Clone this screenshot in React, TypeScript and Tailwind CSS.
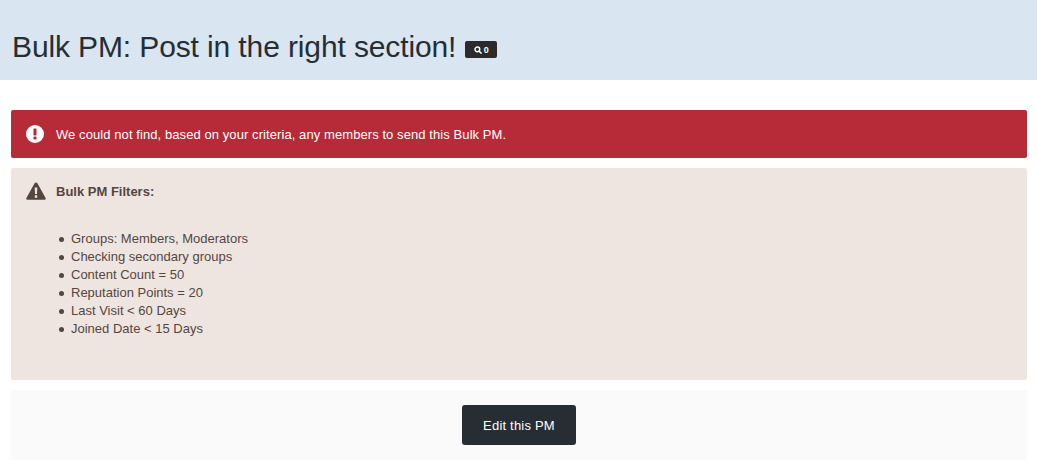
const filters = [
  'Groups: Members, Moderators',
  'Checking secondary groups',
  'Content Count = 50',
  'Reputation Points = 20',
  'Last Visit < 60 Days',
  'Joined Date < 15 Days',
];

export default function App() {
  return (
    <div className="h-[468px] overflow-hidden bg-white font-['Liberation_Sans',Arial,sans-serif] text-[13px] leading-[18px] text-[#262d33]">
      {/* Header */}
      <div className="flex h-[80px] items-end bg-[#d9e6f2] pr-[10px] pl-[12px] pb-[15px]">
        <h1 className="text-[30px] leading-[36px] font-normal tracking-[-0.12px] text-[#262d33]">Bulk PM: Post in the right section!</h1>
        <span className="mb-[7px] ml-[9px] flex h-[17px] w-[32px] items-center justify-center gap-[2px] rounded-[2px] bg-[#2b2b2b] text-[9px] font-bold text-white">
          <svg width="8" height="8" viewBox="0 0 10 10" fill="none" stroke="white" strokeWidth="1.8">
            <circle cx="4.2" cy="4.2" r="3" />
            <path d="M6.5 6.5 9.5 9.5" />
          </svg>
          0
        </span>
      </div>

      <div className="flex flex-col gap-[10px] pt-[30px] pr-[10px] pl-[11px]">
        {/* Error message */}
        <div className="flex h-[48px] items-center rounded-[2px] bg-[#b72a38] px-[15px] tracking-[0.08px] text-white">
          <svg width="18" height="18" viewBox="0 0 18 18" className="mr-[12px]">
            <circle cx="9" cy="9" r="9" fill="white" />
            <rect x="7.5" y="3.4" width="3" height="7.2" rx="0.6" fill="#b72a38" />
            <rect x="7.5" y="11.6" width="3" height="3" rx="0.6" fill="#b72a38" />
          </svg>
          <span className="pt-[2px]">We could not find, based on your criteria, any members to send this Bulk PM.</span>
        </div>

        {/* Filters */}
        <div className="h-[212px] rounded-[2px] bg-[#eee5e0] px-[15px] pt-[14px] text-[#54453f]">
          <div className="flex items-start">
            <svg width="20" height="18" viewBox="0 0 20 18" className="mr-[10px]">
              <path
                fillRule="evenodd"
                fill="#54453f"
                d="M10 0.5c.6 0 1.1.3 1.4.8l8.2 14.6c.5.9-.1 1.9-1.1 1.9H1.5c-1 0-1.6-1-1.1-1.9L8.6 1.3c.3-.5.8-.8 1.4-.8zM8.7 5.5l.3 6.5h2l.3-6.5zM8.8 13.2v2.6h2.4v-2.6z"
              />
            </svg>
            <strong className="mt-[1px]">Bulk PM Filters:</strong>
          </div>
          <ul className="mt-[29px] ml-[33px] list-none">
            {filters.map((f) => (
              <li key={f} className="flex items-center">
                <span className="mr-[7px] h-[5px] w-[5px] rounded-full bg-[#54453f]" />
                {f}
              </li>
            ))}
          </ul>
        </div>

        {/* Actions */}
        <div className="flex h-[70px] justify-center rounded-[2px] bg-[#fafafa] pt-[15px]">
          <button className="h-[40px] w-[114px] rounded-[3px] bg-[#262d33] pt-[2px] tracking-[0.2px] text-white">Edit this PM</button>
        </div>
      </div>
    </div>
  );
}
